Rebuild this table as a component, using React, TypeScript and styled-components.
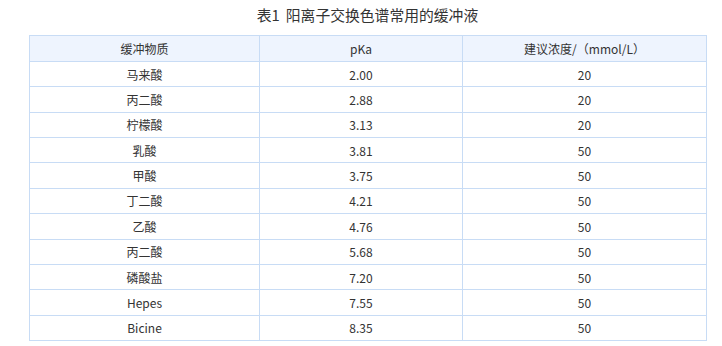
import React from "react";
import styled, { createGlobalStyle } from "styled-components";

const Global = createGlobalStyle`
  html, body { margin: 0; padding: 0; background: #fff; }
  body { font-family: "Noto Sans CJK SC", "Noto Sans", sans-serif; color: #333; }
`;

const Page = styled.div`
  width: 722px;
  height: 346px;
  overflow: hidden;
  padding-left: 29px;
  box-sizing: border-box;
`;

const Title = styled.div`
  width: 677px;
  height: 35px;
  line-height: 30px;
  text-align: center;
  font-size: 14.8px;
  color: #333;
`;

const Gap = styled.span`
  display: inline-block;
  width: 6px;
`;

const Table = styled.table`
  width: 677px;
  border-collapse: collapse;
  table-layout: fixed;
  font-size: 12px;
`;

const HeadCell = styled.th`
  background: #eef4fe;
  border: 1px solid #c8dcf5;
  height: 25px;
  padding: 0;
  font-weight: normal;
  text-align: center;
  color: #333;
`;

const Cell = styled.td`
  border: 1px solid #c8dcf5;
  height: 24.36px;
  padding: 0;
  text-align: center;
  color: #333;
`;

const rows: [string, string, string][] = [
  ["马来酸", "2.00", "20"],
  ["丙二酸", "2.88", "20"],
  ["柠檬酸", "3.13", "20"],
  ["乳酸", "3.81", "50"],
  ["甲酸", "3.75", "50"],
  ["丁二酸", "4.21", "50"],
  ["乙酸", "4.76", "50"],
  ["丙二酸", "5.68", "50"],
  ["磷酸盐", "7.20", "50"],
  ["Hepes", "7.55", "50"],
  ["Bicine", "8.35", "50"],
];

export default function App() {
  return (
    <Page>
      <Global />
      <Title>
        表1<Gap />阳离子交换色谱常用的缓冲液
      </Title>
      <Table>
        <colgroup>
          <col style={{ width: 230 }} />
          <col style={{ width: 203 }} />
          <col style={{ width: 244 }} />
        </colgroup>
        <thead>
          <tr>
            <HeadCell>缓冲物质</HeadCell>
            <HeadCell>pKa</HeadCell>
            <HeadCell>建议浓度/（mmol/L）</HeadCell>
          </tr>
        </thead>
        <tbody>
          {rows.map((r, i) => (
            <tr key={i}>
              <Cell>{r[0]}</Cell>
              <Cell>{r[1]}</Cell>
              <Cell>{r[2]}</Cell>
            </tr>
          ))}
        </tbody>
      </Table>
    </Page>
  );
}
